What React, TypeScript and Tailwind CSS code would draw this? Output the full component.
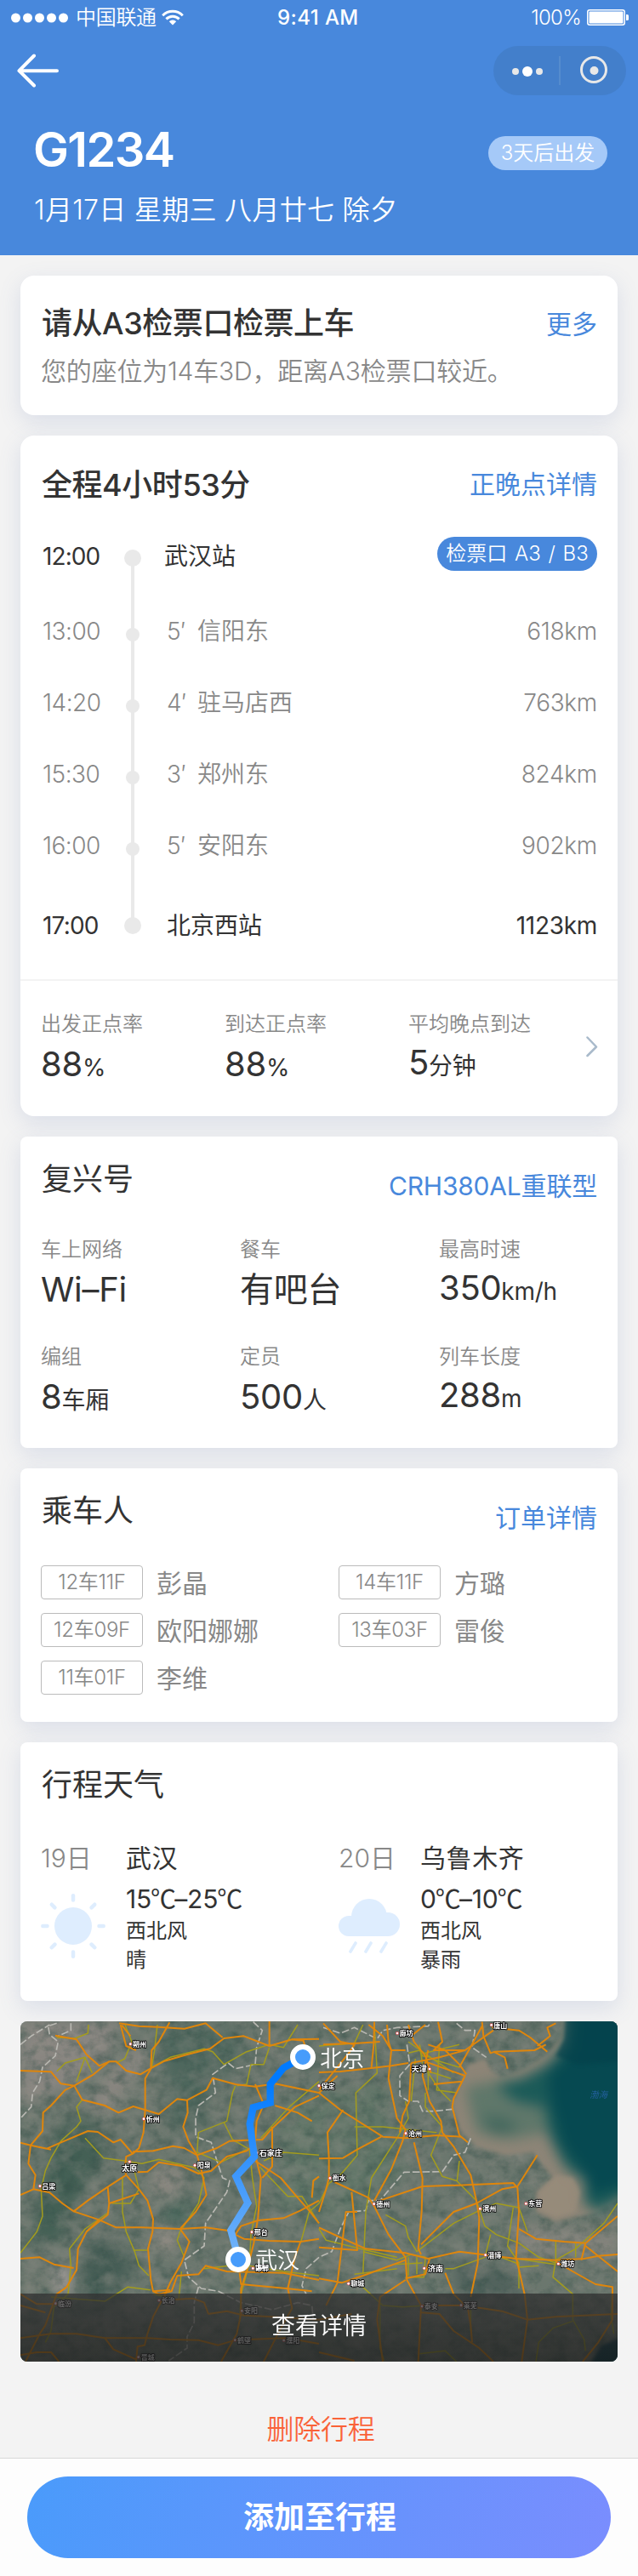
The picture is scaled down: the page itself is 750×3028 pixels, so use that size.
import React from "react";

type Stop = { time: string; wait: string; name: string; km: string };
type Fact = { label: string; value: string; unit?: string; shift?: string };

const stops: Stop[] = [
  { time: "13:00", wait: "5′", name: "信阳东", km: "618km" },
  { time: "14:20", wait: "4′", name: "驻马店西", km: "763km" },
  { time: "15:30", wait: "3′", name: "郑州东", km: "824km" },
  { time: "16:00", wait: "5′", name: "安阳东", km: "902km" },
];

const punctuality: Fact[] = [
  { label: "出发正点率", value: "88", unit: "%" },
  { label: "到达正点率", value: "88", unit: "%" },
  { label: "平均晚点到达", value: "5", unit: "分钟", shift: "-mt-0.5" },
];

const trainFacts: Fact[] = [
  { label: "车上网络", value: "Wi–Fi" },
  { label: "餐车", value: "有吧台" },
  { label: "最高时速", value: "350", unit: "km/h", shift: "-mt-0.5" },
  { label: "编组", value: "8", unit: "车厢" },
  { label: "定员", value: "500", unit: "人" },
  { label: "列车长度", value: "288", unit: "m", shift: "-mt-0.5" },
];

const passengers = [
  { seat: "12车11F", name: "彭晶" },
  { seat: "14车11F", name: "方璐" },
  { seat: "12车09F", name: "欧阳娜娜" },
  { seat: "13车03F", name: "雷俊" },
  { seat: "11车01F", name: "李维" },
];

function Header() {
  return (
    <header className="h-[300px] bg-[#4888dc] text-white">
      <div className="relative flex h-[41px] items-center justify-between pl-[13px] pr-[11px] text-2xl leading-6">
        <div className="flex items-center">
          <svg width="68" height="12" viewBox="0 0 68 12" fill="#fff">
            {[5.5, 19.5, 33.5, 47.5, 61.5].map((x) => (
              <circle key={x} cx={x} cy="6" r="5.5" />
            ))}
          </svg>
          <span className="ml-2 font-[350] tracking-[-0.3px]">中国联通</span>
          <svg className="ml-1.5" width="26" height="19" viewBox="0 0 26 19" fill="none" stroke="#fff" strokeWidth="3">
            <path d="M1.2 7.2a16.8 16.8 0 0 1 23.6 0" />
            <path d="M5.4 11.4a10.8 10.8 0 0 1 15.2 0" />
            <path d="M13 18.6l-4.2-4.4a6 6 0 0 1 8.4 0z" fill="#fff" stroke="none" />
          </svg>
        </div>
        <span className="absolute left-[326px] font-medium tracking-[0.4px]">9:41 AM</span>
        <div className="flex items-center gap-[7px]">
          <span className="font-light tracking-[-0.7px]">100%</span>
          <svg width="49" height="19" viewBox="0 0 49 19">
            <rect x="0.75" y="0.75" width="43.5" height="17.5" rx="2.5" fill="none" stroke="#fff" strokeWidth="1.5" />
            <rect x="2.5" y="2.5" width="40" height="14" rx="1" fill="#fff" />
            <path d="M46 6h1.4a1.6 1.6 0 0 1 1.6 1.6v3.8a1.6 1.6 0 0 1-1.6 1.6H46z" fill="#fff" />
          </svg>
        </div>
      </div>
      <div className="mt-[13px] flex h-[58px] items-center justify-between pl-5 pr-3.5">
        <svg width="50" height="40" viewBox="0 0 50 40" fill="none" stroke="#fff" strokeWidth="4" strokeLinecap="round" strokeLinejoin="round">
          <path d="M20 2.5L2.5 20.2 20 37.5M2.5 20.2H47" />
        </svg>
        <svg width="156" height="58" viewBox="0 0 156 58">
          <rect width="156" height="58" rx="29" fill="#437fcb" />
          <circle cx="26" cy="30" r="4" fill="#e8e8e8" />
          <circle cx="40" cy="30" r="6" fill="#fff" />
          <circle cx="54" cy="30" r="4" fill="#e8e8e8" />
          <path d="M78 12v34" stroke="#5b90cf" strokeWidth="1.5" />
          <circle cx="118" cy="28" r="14.5" fill="none" stroke="#e8e8e8" strokeWidth="3" />
          <circle cx="118.500" cy="29" r="5" fill="#e8e8e8" />
        </svg>
      </div>
      <div className="mt-10 flex items-center justify-between pl-[39px] pr-9">
        <h1 className="text-[56px] font-semibold leading-[48px] tracking-[-1.6px]">G1234</h1>
        <span className="mt-2 flex h-10 w-[140px] items-center justify-center rounded-full bg-[#a5c9f8] text-2xl font-[350] leading-6">
          3天后出发
        </span>
      </div>
      <p className="mt-[29px] pl-10 text-[32px] font-[350] leading-9 tracking-[0.3px]">1月17日 星期三 八月廿七 除夕</p>
    </header>
  );
}

function Card({ className, children }: { className: string; children: React.ReactNode }) {
  return (
    <section className={`bg-white shadow-[0_8px_26px_rgba(96,120,180,0.17)] ${className}`}>{children}</section>
  );
}

function TitleRow({ title, link, bold, drop }: { title: string; link?: string; bold?: boolean; drop: string }) {
  return (
    <div className="flex h-10 items-center justify-between px-6">
      <h2 className={`pl-px text-4xl leading-10 text-[#333] ${bold ? "pt-0.5 font-medium tracking-[-0.45px]" : "font-normal"}`}>{title}</h2>
      {link && <a className={`text-[30px] leading-9 text-[#4888dc] ${drop}`}>{link}</a>}
    </div>
  );
}

function FactCell({ fact }: { fact: Fact }) {
  return (
    <div>
      <div className="pt-px text-2xl font-[350] leading-6 text-[#888]">{fact.label}</div>
      <div className={`pt-[15px] text-[40px] leading-10 tracking-[-0.3px] text-[#333] ${fact.shift ?? ""}`}>
        {fact.value}
        {fact.unit && <span className="text-[28px] leading-10">{fact.unit}</span>}
      </div>
    </div>
  );
}

function Timeline() {
  return (
    <div className="relative mt-[42px] px-6 text-[28px] leading-10 text-[#333]">
      <div className="absolute left-[130px] top-[25px] h-[432px] w-1 bg-[#e9e9e9]" />
      <div className="relative flex h-10 items-center">
        <span className="mt-1.5 w-[98px] pl-0.5 tracking-[-0.9px]">12:00</span>
        <span className="mt-2.5 size-5 rounded-full bg-[#e9e9e9]" />
        <span className="mt-1.5 flex-1 pl-[27px]">武汉站</span>
        <span className="flex h-10 w-[188px] items-center justify-center whitespace-pre rounded-full bg-[#4888dc] text-2xl font-[350] leading-6 text-white [word-spacing:2px]">
          检票口 A3 / B3
        </span>
      </div>
      <div className="relative mt-[29px] text-[#888]">
        {stops.map((s) => (
          <div key={s.time} className="flex h-[84px] items-center">
            <span className="w-[98px] pl-0.5 font-[350] tracking-[-0.5px]">{s.time}</span>
            <span className="flex w-5 justify-center">
              <span className="mt-2 size-4 rounded-full bg-[#e9e9e9]" />
            </span>
            <span className="w-[66px] pl-[30px] font-[350]">{s.wait}</span>
            <span className="flex-1 font-[350]">{s.name}</span>
            <span className="font-[350] tracking-[-0.3px]">{s.km}</span>
          </div>
        ))}
      </div>
      <div className="relative mt-8 flex h-10 items-center">
        <span className="w-[98px] pl-0.5 tracking-[-0.8px]">17:00</span>
        <span className="size-5 rounded-full bg-[#e9e9e9]" />
        <span className="flex-1 pl-[30px]">北京西站</span>
        <span className="tracking-[-0.3px]">1123km</span>
      </div>
    </div>
  );
}

function SunIcon() {
  return (
    <svg width="76" height="76" viewBox="-38 -38 76 76" stroke="#deedfe" strokeWidth="4.500" strokeLinecap="round">
      <circle r="22" fill="#deedfe" stroke="none" />
      {[0, 45, 90, 135, 180, 225, 270, 315].map((a) => (
        <path key={a} d="M0-35.700V-30.500" transform={`rotate(${a})`} />
      ))}
    </svg>
  );
}

function RainIcon() {
  return (
    <svg width="72" height="66" viewBox="0 0 72 66">
      <g fill="#deedfe">
        <circle cx="36" cy="21" r="21" />
        <circle cx="12" cy="32" r="12" />
        <circle cx="58" cy="30" r="14" />
        <path d="M12 20h46v24H12z" />
      </g>
      <path d="M20 52l-6 10M38 52l-6 10M56 52l-6 10" stroke="#deedfe" strokeWidth="3.600" strokeLinecap="round" />
    </svg>
  );
}

function Temperature({ low, high }: { low: number; high: number }) {
  const degree = <span className="-ml-px font-['Noto_Sans_CJK_SC'] tracking-[-1.8px]">℃</span>;
  return (
    <div className="mt-2.5 mb-[5px] h-9 whitespace-nowrap text-[30px] leading-9 tracking-[-0.2px]">
      {low}
      {degree}–{high}
      {degree}
    </div>
  );
}

type WeatherProps = {
  date: string;
  city: string;
  low: number;
  high: number;
  wind: string;
  sky: string;
  side: string;
  children: React.ReactNode;
};

function Weather({ date, city, low, high, wind, sky, side, children }: WeatherProps) {
  return (
    <div className="flex w-[350px] shrink-0">
      <div className={`shrink-0 ${side}`}>
        <div className="text-[30px] font-[350] leading-9 text-[#888]">{date}</div>
        {children}
      </div>
      <div className="text-2xl leading-[34px] text-[#333]">
        <div className="text-[30px] leading-9 tracking-[0.6px]">{city}</div>
        <Temperature low={low} high={high} />
        <div>{wind}</div>
        <div>{sky}</div>
      </div>
    </div>
  );
}

const highways = [
  "M72 222L180 226L215 268L262 275L330 235L385 190L410 190L445 222L495 235L530 215L580 188L660 165L740 145L790 108L860 100L950 135L1030 112L1070 116L1080 150",
  "M195 98L270 112L305 165L350 205L385 190",
  "M420 55L490 65L560 68L650 74L725 55L785 105",
  "M425 60L445 135L480 150M430 62L460 100M598 52L560 120L535 150L532 215L512 250L512 360L506 440L490 495L468 515",
  "M262 275L290 325L370 345L418 370L470 348L560 375L625 322L660 326L728 290L750 248L830 270L900 278L970 268L1125 300L1190 240",
  "M262 275L230 290L180 345L152 370L150 435L108 485L100 550L125 590L118 640L72 660",
  "M72 476L108 485L180 500M165 497L215 475L310 435L345 438L400 475L425 465L468 515L445 525L440 570L445 590",
  "M468 508L540 505L610 488L650 495L695 520L765 495L810 470L925 465L960 425L1040 350L1125 310",
  "M660 326L662 370L646 420L665 470L695 520L712 580L728 660L690 720L635 780L668 825L640 900L600 970L585 1005L540 1090L520 1150L510 1190L485 1195L480 1248",
  "M485 580L520 578L560 545L640 558L700 585L745 575L800 525L870 505L900 480",
  "M445 590L380 632L310 680L260 718L220 690L175 652L118 640",
  "M445 590L490 640L520 680L540 745L538 790L522 850L532 960L540 1000L600 995",
  "M260 718L350 748L410 775L500 775L635 780L725 775L800 785L860 815L950 822L1060 825L1125 815",
  "M380 632L385 690L380 730L305 790L275 850L270 925L235 985L200 1010L160 1120L140 1150L90 1248",
  "M385 690L490 655M305 790L350 748M72 885L140 880L190 905L260 918",
  "M72 1010L130 1045L190 1045M72 1050L160 1075M72 1165L180 1150L270 1150L370 1165L520 1165L600 1170L700 1172L770 1190L830 1172L1010 1165L1125 1185",
  "M72 1225L130 1215L180 1215L208 1248M370 1165L400 1205L480 1240M540 1000L560 1010L605 1000L625 945L700 940L725 910L800 930L1000 935L1125 960",
  "M950 48L950 135M1030 112L1125 110M900 270L930 340L905 400L900 470L905 540L920 600L910 740L895 830L870 930L850 990L850 1080L835 1150L780 1248",
  "M900 540L990 600L1050 670L1090 715L1125 760M925 600L960 560L960 420M970 345L1050 370L1100 400",
  "M910 750L1000 742L1060 715L1125 680M830 800L850 770L910 750M845 935L850 975L1010 990L1100 1000",
  "M735 1080L720 1040L680 1025L600 1030M735 1080L800 1070L860 1085L960 1090L1125 1100L1240 1080",
  "M1060 825L1040 880L1015 990L1030 1060L980 1150L930 1248M1100 670L1105 610L1125 595",
  "M1125 228L1200 225L1290 215L1380 205L1440 195M1140 55L1200 120L1250 130L1230 160L1125 290M1125 300L1200 360L1350 455L1430 460L1540 450L1625 455",
  "M1320 50L1318 130L1310 210M1140 130L1260 125L1340 120M1365 60L1370 120L1380 150L1370 250L1400 390L1430 430L1420 470L1380 570L1320 680",
  "M1430 150L1380 150L1350 100L1300 60M1440 60L1460 120L1500 170L1520 230M1450 100L1500 60M1545 50L1560 120L1530 150L1640 150L1740 80",
  "M1450 195L1443 330L1420 380L1410 440M1450 195L1550 175L1640 150M1510 150L1490 240L1515 330L1555 400L1560 440L1600 490L1660 590L1680 680L1690 740L1685 900L1660 1020",
  "M1500 190L1640 240L1600 320L1595 350L1620 450L1650 475M1510 130L1570 150L1620 200L1645 235M1530 270L1630 260",
  "M1700 50L1705 100L1730 160L1745 155L1885 150L1925 130M1735 70L1830 80L1870 105L1930 155M1700 65L1620 210M1740 155L1780 175L1790 215M1960 55L1930 70L1940 100L1895 135",
  "M1210 360L1155 440L1160 530L1160 600L1150 640L1125 720M1125 532L1210 530L1260 500L1345 455",
  "M1460 475L1490 600L1487 720L1475 850L1485 870M1180 615L1300 670L1320 700L1370 800L1430 880L1435 960L1485 1050L1480 1150L1475 1248",
  "M1340 680L1490 630L1650 625L1810 618L1825 635L1830 720L1820 880L1850 1010L1860 1100L1840 1248",
  "M1825 630L1895 520M1825 630L1770 640L1680 690L1600 720L1520 800L1485 835",
  "M1125 775L1200 810L1290 850L1430 865L1510 885L1620 860L1700 870L1820 885L1960 890L2060 885L2110 875L2180 870",
  "M1830 780L1890 815L1990 825L2065 830L2178 735M2065 830L2050 890M2065 840L2178 930M1125 845L1260 855L1240 650M1125 955L1205 970L1280 945L1430 890M1260 720L1220 720L1190 970L1150 1050",
  "M1515 885L1500 940L1430 955M1570 935L1600 1010L1650 1060L1660 1120L1665 1180M1960 895L2020 930L2100 975L2160 985L2160 1100L2110 1180L2055 1248",
  "M1485 1050L1620 1050L1700 1060L1770 1070L1860 1100L1960 1090L2178 1080M1485 1075L1550 1080L1600 1140L1690 1200L1740 1248M1430 960L1340 1020L1330 1100L1350 1248M1125 1215L1250 1245",
];

const byways = [
  "M312 60L310 90L265 108L200 105M440 58L465 120L440 180L410 195M200 225L230 195L300 175L325 230M300 175L270 260M555 60L545 150L535 210L600 175L720 145L750 155L790 200L870 155L950 130L1000 140L1050 60",
  "M290 325L270 350L285 400L270 420L215 470L180 530L160 575L145 640L150 735L130 790L72 865M300 460L365 530L440 540L500 550L560 535L690 565L720 600L700 690L635 790L625 820L650 880",
  "M432 600L432 720L445 790L475 860L490 910L525 945M470 855L520 855M475 580L490 640L460 690L395 690M385 720L300 780L245 850L250 910L240 1010L190 1055L180 1140L160 1180",
  "M830 275L820 300L800 400L700 440L695 510L780 545L870 500M790 405L820 465L880 500L890 600L905 700L885 800L880 900L850 1010L845 1100M885 200L870 270L835 275M885 200L930 200L950 140",
  "M915 560L1015 665L1065 665L1125 760M930 540L1000 510L1125 520M920 460L1020 350L1125 260M1060 830L1090 720L1125 690M180 1020L370 1035L450 985L530 995M720 920L850 905L1000 930L1125 945M540 1010L630 1030L640 930",
  "M1320 50L1330 230L1255 300L1260 520L1200 590L1160 620L1125 690M1125 135L1250 125L1280 60M1430 330L1440 390L1400 460L1310 600L1290 720L1280 940",
  "M1250 420L1350 420L1540 440M1500 300L1500 350L1560 420L1520 520L1560 595L1610 610L1680 680L1710 770L1750 800L1830 830L1900 880L1960 900M1360 730L1430 770L1440 810L1470 860L1600 760L1690 715L1750 690M1612 610L1620 540",
  "M1480 130L1490 200L1550 290L1590 330M1500 160L1620 130M1520 180L1620 210M1550 130L1540 290L1610 300M1440 120L1540 190L1600 230M1125 780L1150 820L1270 850L1400 880M1280 860L1400 890L1450 870L1500 880L1495 950L1430 950M1250 940L1400 920",
  "M1750 690L1830 705L1860 790M1810 705L1790 840L1830 900L1830 990M1900 910L1830 915L1820 900L1740 870M1730 800L1710 880L1600 920L1570 920M2178 690L2130 760L2030 850L1960 890L1950 950L2020 1010L2020 1100L2060 1170L2065 1210M1960 820L1960 900M2030 830L2030 880",
  "M1280 985L1350 1050L1420 1055L1500 1050M1340 1020L1340 1200L1355 1245M1480 1220L1570 1210L1610 1248M2020 1105L1950 1130L1900 1180L1890 1248M1660 1060L1660 1140M2160 985L2155 1090L2165 1150",
  "M1440 160L1480 150L1490 170L1520 175M1450 215L1530 230L1590 250M1510 210L1510 290M1465 180L1450 330M1390 905L1490 900M1440 880L1440 945M1470 880L1470 940M1820 885L1960 905",
];

const borders = [
  "M200 55L170 65L175 95L205 120L195 170L150 210L140 260L115 300L110 350L72 390M250 55L250 80L205 100M72 130L110 100L175 60",
  "M893 50L925 80L905 140L900 200L830 215L805 195L750 235L760 300L700 345L690 390L690 455L745 475L765 540L785 600L810 610L800 650L725 760L720 840L650 890L665 950L710 990L770 1000L850 1040L960 1065L1050 1040L1100 1050L1105 1100M700 985L685 1040L685 1110L660 1160L660 1200L595 1245M1125 880L1080 920L1065 980L1080 1010",
  "M1140 70L1200 90L1250 70L1330 110L1350 80L1400 70L1510 65L1520 50M1435 130L1445 200L1410 240L1410 310L1440 330L1475 330L1490 365L1530 365L1595 358M1610 55L1640 80L1675 80L1665 140L1715 175M1660 460L1640 510L1600 520L1560 578L1425 580L1340 680L1300 680L1290 715L1230 720L1200 780L1170 860L1125 880",
];

const cities: [string, number, number, number, number][] = [
  ["朔州", 460, 128, 468, 137], ["忻州", 507, 392, 515, 401], ["太原", 457, 543, 430, 575],
  ["阳泉", 687, 556, 695, 565], ["吕梁", 141, 629, 148, 638], ["石家庄", 905, 512, 914, 522],
  ["邢台", 888, 791, 896, 800], ["邯郸", 892, 919, 900, 928], ["临汾", 196, 1043, 204, 1052],
  ["长治", 561, 1032, 569, 1041], ["安阳", 853, 1069, 861, 1078], ["鹤壁", 829, 1172, 837, 1181],
  ["濮阳", 1001, 1173, 1009, 1182], ["晋城", 488, 1232, 497, 1241], ["保定", 1125, 275, 1133, 284],
  ["廊坊", 1401, 90, 1409, 99], ["天津", 1515, 216, 1451, 225], ["唐山", 1733, 61, 1741, 71],
  ["沧州", 1431, 443, 1440, 453], ["衡水", 1164, 601, 1172, 610], ["德州", 1319, 692, 1327, 701],
  ["滨州", 1693, 709, 1702, 718], ["东营", 1855, 691, 1864, 700], ["淄博", 1712, 872, 1720, 881],
  ["潍坊", 1969, 903, 1978, 912], ["济南", 1496, 919, 1509, 929], ["聊城", 1229, 973, 1237, 982],
  ["泰安", 1488, 1053, 1496, 1062], ["莱芜", 1626, 1049, 1634, 1058],
];

const capitals = ["太原", "石家庄", "天津", "济南"];

function RouteMap() {
  return (
    <svg className="block" width="702" height="400" viewBox="72 48 2106 1200">
      <defs>
        <filter id="relief" x="0" y="0" width="100%" height="100%" colorInterpolationFilters="sRGB">
          <feTurbulence type="fractalNoise" baseFrequency="0.022 0.026" numOctaves="5" seed="8" />
          <feColorMatrix values="0 0 0 0 0.20  0 0 0 0 0.31  0 0 0 0 0.28  2.2 0 0 0 -0.9" />
        </filter>
        <filter id="dust" x="0" y="0" width="100%" height="100%" colorInterpolationFilters="sRGB">
          <feTurbulence type="fractalNoise" baseFrequency="0.014 0.018" numOctaves="5" seed="21" />
          <feColorMatrix values="0 0 0 0 0.57  0 0 0 0 0.56  0 0 0 0 0.53  0 2.2 0 0 -0.85" />
        </filter>
        <filter id="soft" x="-30%" y="-30%" width="160%" height="160%" colorInterpolationFilters="sRGB">
          <feGaussianBlur stdDeviation="22" />
        </filter>
        <filter id="edge" x="-10%" y="-10%" width="120%" height="120%" colorInterpolationFilters="sRGB">
          <feGaussianBlur stdDeviation="7" />
        </filter>
        <linearGradient id="route" x1="0" y1="175" x2="0" y2="880" gradientUnits="userSpaceOnUse">
          <stop offset="0.12" stopColor="#007aff" />
          <stop offset="0.6" stopColor="#3f98fc" />
          <stop offset="1" stopColor="#74b4f8" />
        </linearGradient>
      </defs>
      <rect x="72" y="48" width="2106" height="1200" fill="#6b776e" />
      <g filter="url(#soft)">
        <path d="M72 48h350l-40 130-160 110-150 60z" fill="#898681" />
        <path d="M300 330l170-190 70 10-130 190-70 50z" fill="#898680" />
        <path d="M560 60l260 0 60 100-140 120-20 160-110-30z" fill="#4e675d" />
        <path d="M200 420l130-40 50 120-100 160-80 180-100-20z" fill="#446055" />
        <path d="M300 830l90-40 80 130-60 120-140 60z" fill="#485f57" />
        <path d="M180 900l60 10 20 90-60 10z" fill="#a09a97" />
        <path d="M560 770l80 0-30 90-70-10z" fill="#8f8a82" />
        <path d="M540 560l120 20-50 90-70-20z" fill="#8a8780" />
        <path d="M590 680l120 20-70 90-80-60z" fill="#4d695e" />
        <path d="M1000 330l350-60 80 300-200 200-250-60z" fill="#617668" />
        <path d="M1600 900l200 20 60 130-240 20z" fill="#52635d" />
        <path d="M1800 760l380 30 0 100-380-20z" fill="#83837c" />
      </g>
      <rect x="72" y="48" width="2106" height="1200" filter="url(#relief)" opacity="0.5" />
      <rect x="72" y="48" width="2106" height="1200" filter="url(#dust)" opacity="0.42" />
      <g filter="url(#edge)">
        <path d="M1982 30L1980 100L1930 165L1850 215L1770 245L1735 225L1710 180L1650 200L1595 335L1620 430L1680 490L1780 520L1880 510L1950 600L1890 650L1890 720L1960 755L2040 735L2110 720L2200 665V30z" fill="#8d8577" />
      </g>
      <g filter="url(#soft)">
        <path d="M1640 280L1800 250L1920 260L1930 440L1790 465L1680 440z" fill="#5f776a" />
        <path d="M1700 380l90 10 40 40-90 20z" fill="#45685e" />
        <path d="M2010 0L1995 130L1930 200L1840 250L1750 275L1820 330L1920 350L1935 450L1990 560L2060 610L2060 690L2110 720L2230 650V0z" fill="#1b5a58" />
        <path d="M2030 0L2010 150L1930 240L1940 320L1980 480L2070 600L2090 660L2240 620V0z" fill="#064951" />
      </g>
      <g filter="url(#edge)">
        <path d="M1995 30L1990 110L1960 170L2040 200L2190 190V30z" fill="#04424c" opacity="0.7" />
        <path d="M1900 650L1960 590L2020 600L2045 650L2030 720L1960 740L1900 710z" fill="#998c7a" opacity="0.8" />
      </g>
      <path d="M2190 1160L2120 1190L2080 1260H2190z" fill="#073845" filter="url(#edge)" />
      <g fill="none" strokeLinejoin="round">
        {borders.map((d) => (
          <path key={d} d={d} stroke="#b9b8b2" strokeWidth="5" strokeDasharray="26 9" />
        ))}
        {byways.map((d) => (
          <path key={d} d={d} stroke="#a39c1d" strokeWidth="4.500" />
        ))}
        {highways.map((d) => (
          <path key={d} d={d} stroke="#df860c" strokeWidth="6" />
        ))}
      </g>
      <g fontWeight="700" stroke="#151515" strokeWidth="6" strokeLinejoin="round" paintOrder="stroke" fill="#fff">
        {cities.map(([name, cx, cy, tx, ty]) => (
          <g key={name}>
            <circle cx={cx} cy={cy} r="4" fill="#fff" stroke="#e04a50" strokeWidth="4" />
            <text x={tx} y={ty} fontSize={capitals.includes(name) ? 27 : 24}>{name}</text>
          </g>
        ))}
      </g>
      <text x="2080" y="317" fontSize="31" fontStyle="italic" fill="#24609c">渤海</text>
      <path
        d="M1068 175L1000 212L953 270V335L893 352L881 410L897 525L832 595L874 688L814 785L840 880"
        fill="none"
        stroke="url(#route)"
        strokeWidth="25"
      />
      {[[1068, 174], [840, 888]].map(([x, y]) => (
        <circle key={x} cx={x} cy={y} r="36" fill="#479cfb" stroke="#fff" strokeWidth="18" />
      ))}
      <g fill="#fff" fontSize="78" fontWeight="350">
        <text x="1129" y="206">北京</text>
        <text x="900" y="918">武汉</text>
      </g>
    </svg>
  );
}

export default function App() {
  return (
    <div className="flex min-h-[3028px] w-[750px] flex-col bg-[#f3f3f3] font-['Inter','Noto_Sans_CJK_SC',sans-serif]">
      <Header />
      <main className="flex flex-col gap-6 px-6 pt-6">
        <Card className="h-[164px] rounded-2xl pt-[35px]">
          <TitleRow title="请从A3检票口检票上车" link="更多" bold drop="mt-1" />
          <p className="mt-[19px] px-6 text-[30px] font-[350] leading-9 tracking-[-0.2px] text-[#888]">您的座位为14车3D，距离A3检票口较近。</p>
        </Card>

        <Card className="h-[800px] rounded-2xl pt-[37px]">
          <TitleRow title="全程4小时53分" link="正晚点详情" bold drop="" />
          <Timeline />
          <div className="mt-[43px] h-0.5 bg-[#f3f3f3]" />
          <div className="flex px-6 pt-[38px]">
            {punctuality.map((f) => (
              <div key={f.label} className="w-[216px] shrink-0">
                <FactCell fact={f} />
              </div>
            ))}
            <svg className="-ml-[7px] mt-[26px] shrink-0" width="14" height="26" viewBox="0 0 14 26" fill="none" stroke="#a9bacb" strokeWidth="2.500" strokeLinecap="round" strokeLinejoin="round">
              <path d="M1.500 2.500L12 13.500 1.500 24" />
            </svg>
          </div>
        </Card>

        <Card className="h-[366px] rounded-lg pt-[30px]">
          <TitleRow title="复兴号" link="CRH380AL重联型" drop="mt-4 tracking-[-0.2px]" />
          <div className="mt-[50px] grid grid-cols-3">
            {trainFacts.map((f) => (
              <div key={f.label} className="h-[126px] pl-6">
                <FactCell fact={f} />
              </div>
            ))}
          </div>
        </Card>

        <Card className="h-[298px] rounded-lg pt-[30px]">
          <TitleRow title="乘车人" link="订单详情" drop="mt-4" />
          <ul className="mt-11 grid grid-cols-[350px_1fr] gap-y-4 px-6 text-[#888]">
            {passengers.map((p) => (
              <li key={p.name} className="flex h-10 items-center">
                <span className="flex h-10 w-[120px] items-center justify-center rounded border border-[#bbb] text-2xl font-[350] leading-6 tracking-[-0.3px]">
                  {p.seat}
                </span>
                <span className="ml-4 mt-0.5 text-[30px] leading-9">{p.name}</span>
              </li>
            ))}
          </ul>
        </Card>

        <Card className="h-[304px] rounded-lg pt-[30px]">
          <TitleRow title="行程天气" drop="" />
          <div className="mt-12 flex pl-6">
            <Weather date="19日" city="武汉" low={15} high={25} wind="西北风" sky="晴" side="w-[100px]">
              <div className="mt-6"><SunIcon /></div>
            </Weather>
            <Weather date="20日" city="乌鲁木齐" low={0} high={10} wind="西北风" sky="暴雨" side="w-24">
              <div className="mt-[30px]"><RainIcon /></div>
            </Weather>
          </div>
        </Card>

        <section className="relative h-[400px] overflow-hidden rounded-lg">
          <RouteMap />
          <div className="absolute inset-x-0 bottom-0 flex h-20 items-center justify-center bg-linear-to-b from-[#303030]/75 to-[#1c1c1c]/75 pb-1 text-[28px] font-[350] leading-9 text-white">
            查看详情
          </div>
        </section>
      </main>

      <button className="mt-[62px] pl-1 text-[32px] font-[350] leading-9 tracking-[-0.3px] text-[#fa6238]">删除行程</button>
      <footer className="mt-[15px] h-[139px] border-t border-[#d8d8d8] bg-[#fdfdfd] px-8 pt-[21px]">
        <button className="h-24 w-full rounded-full bg-linear-[105deg] from-[#4a9bfb] to-[#7a8dfe] pl-0.5 text-4xl font-bold text-white">
          添加至行程
        </button>
      </footer>
    </div>
  );
}
